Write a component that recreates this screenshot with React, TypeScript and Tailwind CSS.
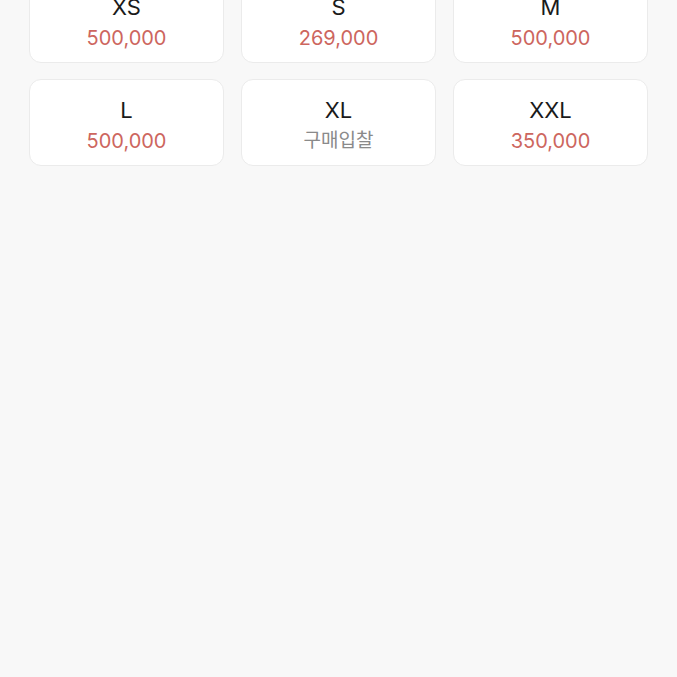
const sizes = [
  { size: "XS", price: "500,000" },
  { size: "S", price: "269,000" },
  { size: "M", price: "500,000" },
  { size: "L", price: "500,000" },
  { size: "XL", price: null },
  { size: "XXL", price: "350,000" },
];

export default function App() {
  return (
    <div
      className="min-h-[677px] w-full overflow-hidden bg-[#f8f8f8]"
      style={{ fontFamily: 'Inter, "Noto Sans CJK KR", sans-serif' }}
    >
      <div className="-mt-[24px] grid grid-cols-3 gap-x-[17px] gap-y-[16px] px-[29px]">
        {sizes.map((s) => (
          <button
            key={s.size}
            type="button"
            className="flex h-[87px] flex-col items-center justify-center rounded-[12px] border border-[#ebebeb] bg-white pt-[4px]"
          >
            <span className="text-[22px] leading-[28px] text-[#1a1a1a]">{s.size}</span>
            <span
              className={
                s.price
                  ? "mt-[4px] text-[20px] leading-[26px] text-[#cd665e]"
                  : "mt-[4px] text-[19px] leading-[26px] text-[#8a8a8a]"
              }
            >
              {s.price ?? "구매입찰"}
            </span>
          </button>
        ))}
      </div>
    </div>
  );
}
